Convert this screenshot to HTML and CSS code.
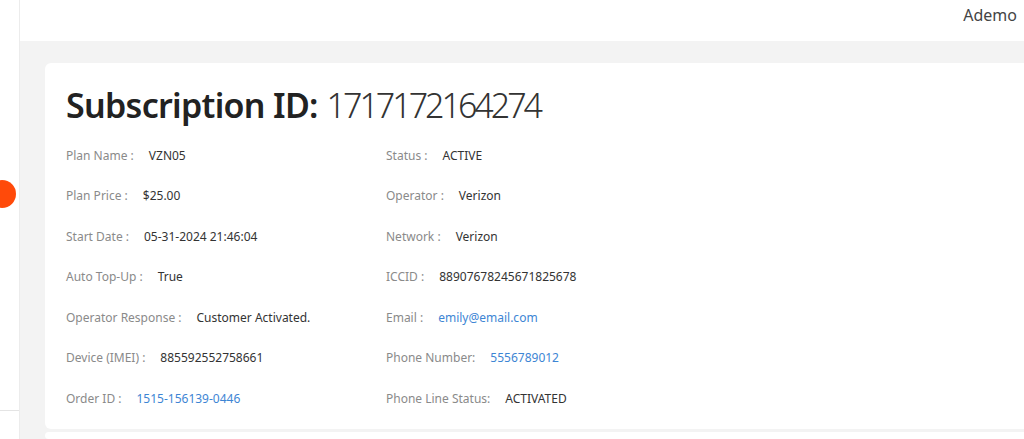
FILE: index.html
```html
<!DOCTYPE html>
<html>
  <head>
    <meta name="viewport" content="width=device-width,initial-scale=1.0" />
    <title>Subscription details</title>
    <link rel="stylesheet" href="styles.css">
  </head>
  <body>
    <aside class="sidebar">
      <span class="sidebar-toggle"></span>
      <div class="sidebar-footer"></div>
    </aside>

    <div class="main">
      <header class="topbar">
        <span class="user-name">Ademo</span>
      </header>

      <section class="content">
        <div class="card">
          <h1 class="sub-title"><b>Subscription ID:</b> <span class="sub-id">1717172164274</span></h1>

          <div class="details">
            <div class="detail"><span class="label">Plan Name :</span><span class="value">VZN05</span></div>
            <div class="detail"><span class="label">Status :</span><span class="value">ACTIVE</span></div>

            <div class="detail"><span class="label">Plan Price :</span><span class="value">$25.00</span></div>
            <div class="detail"><span class="label">Operator :</span><span class="value">Verizon</span></div>

            <div class="detail"><span class="label">Start Date :</span><span class="value">05-31-2024 21:46:04</span></div>
            <div class="detail"><span class="label">Network :</span><span class="value">Verizon</span></div>

            <div class="detail"><span class="label">Auto Top-Up :</span><span class="value">True</span></div>
            <div class="detail"><span class="label">ICCID :</span><span class="value">88907678245671825678</span></div>

            <div class="detail"><span class="label">Operator Response :</span><span class="value">Customer Activated.</span></div>
            <div class="detail"><span class="label">Email :</span><a class="value link" href="#">emily@email.com</a></div>

            <div class="detail"><span class="label">Device (IMEI) :</span><span class="value">885592552758661</span></div>
            <div class="detail"><span class="label">Phone Number:</span><a class="value link" href="#">5556789012</a></div>

            <div class="detail"><span class="label">Order ID :</span><a class="value link" href="#">1515-156139-0446</a></div>
            <div class="detail"><span class="label">Phone Line Status:</span><span class="value">ACTIVATED</span></div>
          </div>
        </div>

        <div class="card card-next"></div>
      </section>
    </div>
  </body>
</html>
```

FILE: styles.css
```css
html, body {
  height: 100%;
}

body {
  margin: 0;
  display: flex;
  overflow: hidden;
  font-family: "Noto Sans", "Open Sans", Arial, sans-serif;
  color: #333;
  background: #fff;
}

.sidebar {
  position: relative;
  width: 19px;
  flex-shrink: 0;
  border-right: 1px solid #ececec;
  background: #fff;
}

/* collapse button sticking out of the sidebar edge */
.sidebar-toggle {
  position: absolute;
  left: -12px;
  top: 180px;
  width: 28px;
  height: 28px;
  border-radius: 50%;
  background: #ff4a0a;
}

.sidebar-footer {
  position: absolute;
  left: 0;
  right: 0;
  top: 410px;
  border-top: 1px solid #e4e4e4;
}

.main {
  flex-grow: 1;
  display: flex;
  flex-direction: column;
  min-width: 0;
  overflow: hidden;
}

.topbar {
  height: 41px;
  flex-shrink: 0;
  display: flex;
  justify-content: flex-end;
  background: #fff;
}

.user-name {
  margin: 4px 7px 0 0;
  font-size: 16px;
  color: #444;
}

.content {
  flex-grow: 1;
  min-height: 0;
  overflow: hidden;
  background: #f3f3f3;
  padding: 22px 0 0 25px;
  display: flex;
  flex-direction: column;
  gap: 3px;
}

.card {
  flex-shrink: 0;
  background: #fff;
  border-radius: 6px;
  margin-right: -12px;
  padding: 19px 21px 10px;
}

.card-next {
  flex-grow: 1;
  padding: 0;
}

.sub-title {
  margin: 0 0 7px;
  font-size: 34px;
  font-weight: 400;
  color: #222;
}

.sub-title b {
  font-weight: 600;
  letter-spacing: -0.7px;
}

.sub-id {
  font-weight: 300;
  color: #333;
  letter-spacing: -3px;
}

.details {
  display: grid;
  grid-template-columns: 320px 320px;
  grid-auto-rows: 40.5px;
  align-items: center;
  font-size: 12px;
}

.detail {
  display: flex;
  gap: 15px;
}

.label {
  color: #8a8a8a;
}

.value {
  color: #333;
}

.link {
  color: #3d85d4;
  text-decoration: none;
}
```
